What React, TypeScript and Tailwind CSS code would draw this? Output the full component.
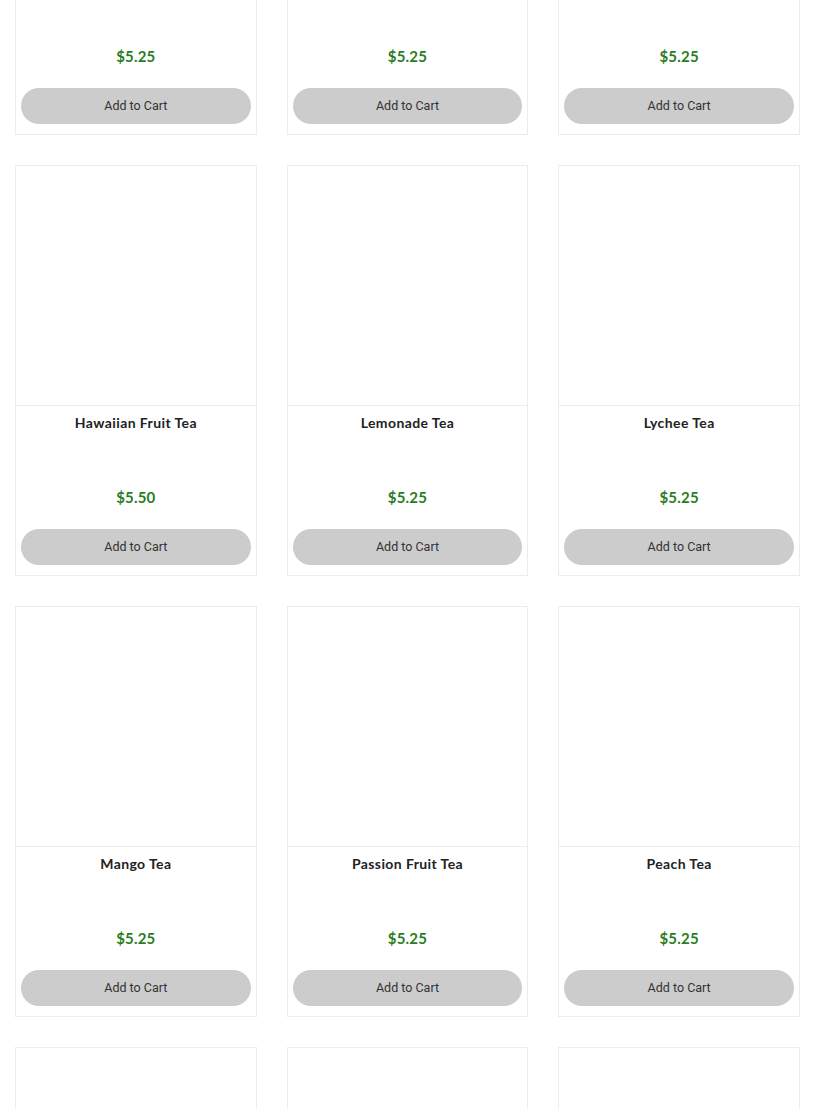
import React from "react";

interface Product {
  name: string;
  price: string;
}

const products: Product[] = [
  { name: "Green Tea", price: "$5.25" },
  { name: "Black Tea", price: "$5.25" },
  { name: "Oolong Tea", price: "$5.25" },
  { name: "Hawaiian Fruit Tea", price: "$5.50" },
  { name: "Lemonade Tea", price: "$5.25" },
  { name: "Lychee Tea", price: "$5.25" },
  { name: "Mango Tea", price: "$5.25" },
  { name: "Passion Fruit Tea", price: "$5.25" },
  { name: "Peach Tea", price: "$5.25" },
  { name: "Strawberry Tea", price: "$5.25" },
  { name: "Taro Tea", price: "$5.25" },
  { name: "Wintermelon Tea", price: "$5.25" },
];

function ProductCard({ product }: { product: Product }) {
  return (
    <div className="flex flex-col border border-[#ececec] bg-white">
      {/* Image placeholder */}
      <div className="h-[240px] border-b border-[#ececec]" />

      <div className="flex flex-col items-center px-[5px]">
        <p className="mt-[7px] h-[20px] text-[14px] leading-[20px] font-bold text-[#222] font-['Lato',sans-serif] tracking-[0.4px]">
          {product.name}
        </p>
        <p className="mt-[54px] h-[20px] text-[15px] leading-[20px] font-bold text-[#2a7d1f] font-['Lato',sans-serif] tracking-[0.2px]">
          {product.price}
        </p>
        <button className="mt-[22px] mb-[10px] h-9 w-full rounded-full bg-[#cccccc] text-[12.5px] text-[#333] font-['Roboto',sans-serif]">
          Add to Cart
        </button>
      </div>
    </div>
  );
}

export default function App() {
  return (
    <div className="h-[1109px] overflow-hidden bg-white">
      <div className="-mt-[276px] grid grid-cols-3 gap-x-[30px] gap-y-[30px] px-[15px]">
        {products.map((p) => (
          <ProductCard key={p.name} product={p} />
        ))}
      </div>
    </div>
  );
}
